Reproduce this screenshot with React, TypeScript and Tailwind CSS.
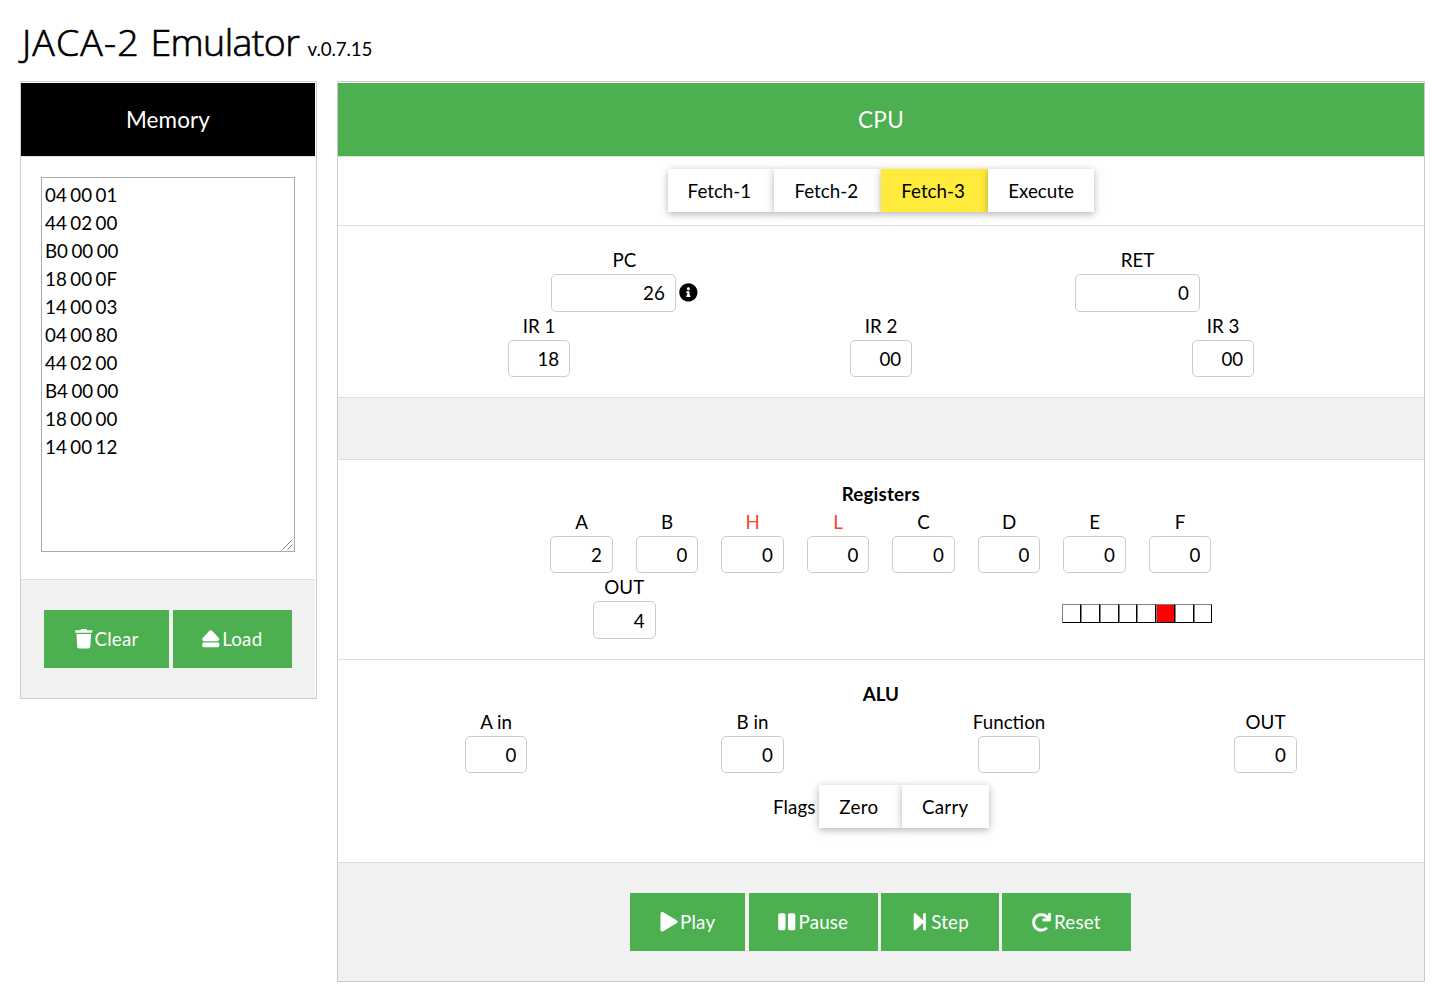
import type { ReactNode } from "react";
import { FaTrash, FaEject, FaPlay, FaPause, FaStepForward, FaRedo, FaInfoCircle } from "react-icons/fa";

const program = [
  "04 00 01", "44 02 00", "B0 00 00", "18 00 0F", "14 00 03",
  "04 00 80", "44 02 00", "B4 00 00", "18 00 00", "14 00 12",
].join("\n");

const registers = [
  { name: "A", value: "2" },
  { name: "B", value: "0" },
  { name: "H", value: "0", pointer: true },
  { name: "L", value: "0", pointer: true },
  { name: "C", value: "0" },
  { name: "D", value: "0" },
  { name: "E", value: "0" },
  { name: "F", value: "0" },
];

const leds = [false, false, false, false, false, true, false, false];

function Field({ label, value, wide, red, children }: { label: string; value: string; wide?: boolean; red?: boolean; children?: ReactNode }) {
  return (
    <div className="flex flex-col items-center">
      <div className={red ? "text-[#f44336]" : ""}>{label}</div>
      <div className="flex items-center">
        <input
          readOnly
          value={value}
          className={`h-[37.5px] rounded-[5px] border border-[#ccc] bg-white px-2.5 text-right outline-none ${wide ? "w-[125px]" : "w-[62.5px]"}`}
        />
        {children}
      </div>
    </div>
  );
}

function Chip({ children, active, last }: { children: ReactNode; active?: boolean; last?: boolean }) {
  return (
    <div className={`flex h-[43px] items-center pl-5 pt-0.5 shadow-[0_2px_6px_0_rgba(0,0,0,0.2),0_2px_12px_0_rgba(0,0,0,0.12)] ${last ? "pr-5" : "pr-[23.3px]"} ${active ? "bg-[#ffeb3b]" : "bg-white"}`}>
      {children}
    </div>
  );
}

function Action({ icon, children, width }: { icon: ReactNode; children: ReactNode; width: string }) {
  return (
    <button className={`flex h-[58px] items-center justify-center bg-[#4caf50] tracking-[0.2px] text-white ${width}`}>
      {icon}
      <span>{children}</span>
    </button>
  );
}

export default function App() {
  return (
    <div className="h-[1002px] w-[1453px] overflow-hidden bg-white px-5 pt-[14px] font-['Lato',sans-serif] text-[18.75px] leading-[28.125px] text-black">
      <header className="flex h-[67px] items-baseline">
        <h1 className="w-[287.5px] whitespace-nowrap pl-[2px] font-['Open_Sans',sans-serif] text-[37.5px] font-light leading-[56px] [-webkit-text-stroke:0.7px_black]">
          <span className="tracking-[1.1px]">JACA-2 </span>
          <span className="tracking-[-0.6px]">Emulator</span>
        </h1>
        <span className="tracking-[-0.15px]">v.0.7.15</span>
      </header>
      <main className="flex items-start gap-5">
        <section className="h-[618px] w-[297px] border border-[#ccc] pt-px pr-px">
          <h2 className="flex h-[73px] items-center justify-center bg-black pt-0.5 text-[22.5px] tracking-[0.1px] text-white">Memory</h2>
          <div className="h-[424px] border-y border-[#ddd] p-5">
            <div className="relative">
              <textarea readOnly value={program} className="block h-[375px] w-[254px] resize-none border border-[#a9a9a9] bg-white p-[3px] leading-[28px] outline-none [word-spacing:-1.3px]" />
              <svg className="absolute right-0.5 bottom-0.5 size-[11px]" viewBox="0 0 11 11" stroke="#444" strokeWidth="0.7">
                <path d="M0.5 10.5 10.5 0.5M5.5 10.5 10.5 5.5" />
              </svg>
            </div>
          </div>
          <div className="flex h-[118px] justify-center gap-1 bg-[#f1f1f1] pt-[30px]">
            <Action width="w-[125px]" icon={<FaTrash className="mr-[1.5px] ml-[-1px] size-[19.5px]" />}>Clear</Action>
            <Action width="w-[119px]" icon={<FaEject className="mr-[1.5px] ml-[-1.5px] size-[19.5px]" />}>Load</Action>
          </div>
        </section>
        <section className="h-[901px] w-[1088px] border border-[#ccc] pt-px">
          <h2 className="flex h-[73px] items-center justify-center bg-[#4caf50] pt-0.5 text-[22.5px] tracking-[0.3px] text-white">CPU</h2>
          <div className="flex h-[70px] justify-center border-y border-[#ddd] pt-3 pr-[0.6px]">
            <Chip>Fetch-1</Chip>
            <Chip>Fetch-2</Chip>
            <Chip active>Fetch-3</Chip>
            <Chip last>Execute</Chip>
          </div>
          <div className="h-[172px] border-b border-[#ddd] px-[30px] pt-5">
            <div className="grid grid-cols-2">
              <Field label="PC" value="26" wide><FaInfoCircle className="mb-[0.5px] ml-[3.5px] size-[18.75px]" /></Field>
              <Field label="RET" value="0" wide />
            </div>
            <div className="grid grid-cols-3">
              <Field label="IR 1" value="18" />
              <Field label="IR 2" value="00" />
              <Field label="IR 3" value="00" />
            </div>
          </div>
          <div className="h-[62px] border-b border-[#ddd] bg-[#f1f1f1]" />
          <div className="h-[200px] border-b border-[#ddd] pt-[19.6px] pr-[30.2px] pl-[29.8px]">
            <h3 className="text-center font-bold tracking-[0.2px]">Registers</h3>
            <div className="grid grid-cols-8 px-[171px]">
              {registers.map((r) => <Field key={r.name} label={r.name} value={r.value} red={r.pointer} />)}
            </div>
            <div className="grid grid-cols-2">
              <Field label="OUT" value="4" />
              <div className="flex justify-center pt-[30.5px]">
                <div className="grid h-[19px] w-[150px] grid-cols-8">
                  {leds.map((on, i) => (
                    <div key={i} className={`border border-t-[#808080] border-r-black border-b-black border-l-[#808080] ${on ? "bg-[#f00]" : "bg-white"}`} />
                  ))}
                </div>
              </div>
            </div>
          </div>
          <div className="h-[203px] border-b border-[#ddd] pt-[19.6px] pr-[30.2px] pl-[29.8px]">
            <h3 className="text-center font-bold">ALU</h3>
            <div className="grid grid-cols-4">
              <Field label="A in" value="0" />
              <Field label="B in" value="0" />
              <Field label="Function" value="" />
              <Field label="OUT" value="0" />
            </div>
            <div className="flex items-center justify-center pt-[11.6px]">
              <span className="mr-[3.6px] pt-0.5 tracking-[0.1px]">Flags</span>
              <Chip><span className="tracking-[0.4px]">Zero</span></Chip>
              <Chip last><span className="tracking-[0.3px]">Carry</span></Chip>
            </div>
          </div>
          <div className="flex h-[118px] justify-center gap-[3.2px] bg-[#f1f1f1] pt-[30px] pr-[0.6px]">
            <Action width="w-[115px]" icon={<FaPlay className="mr-[2.5px] ml-[-1px] h-[19.5px] w-[18px]" />}>Play</Action>
            <Action width="w-[129px]" icon={<FaPause className="mr-[2.5px] ml-[0.5px] h-[19.5px] w-[17.5px]" />}>Pause</Action>
            <Action width="w-[118px]" icon={<FaStepForward className="mr-[1.5px] ml-[-0.5px] size-[19.5px]" />}>Step</Action>
            <Action width="w-[129px]" icon={<FaRedo className="mr-[3px] size-[18.75px] overflow-visible stroke-current stroke-[8px]" />}>Reset</Action>
          </div>
        </section>
      </main>
    </div>
  );
}
